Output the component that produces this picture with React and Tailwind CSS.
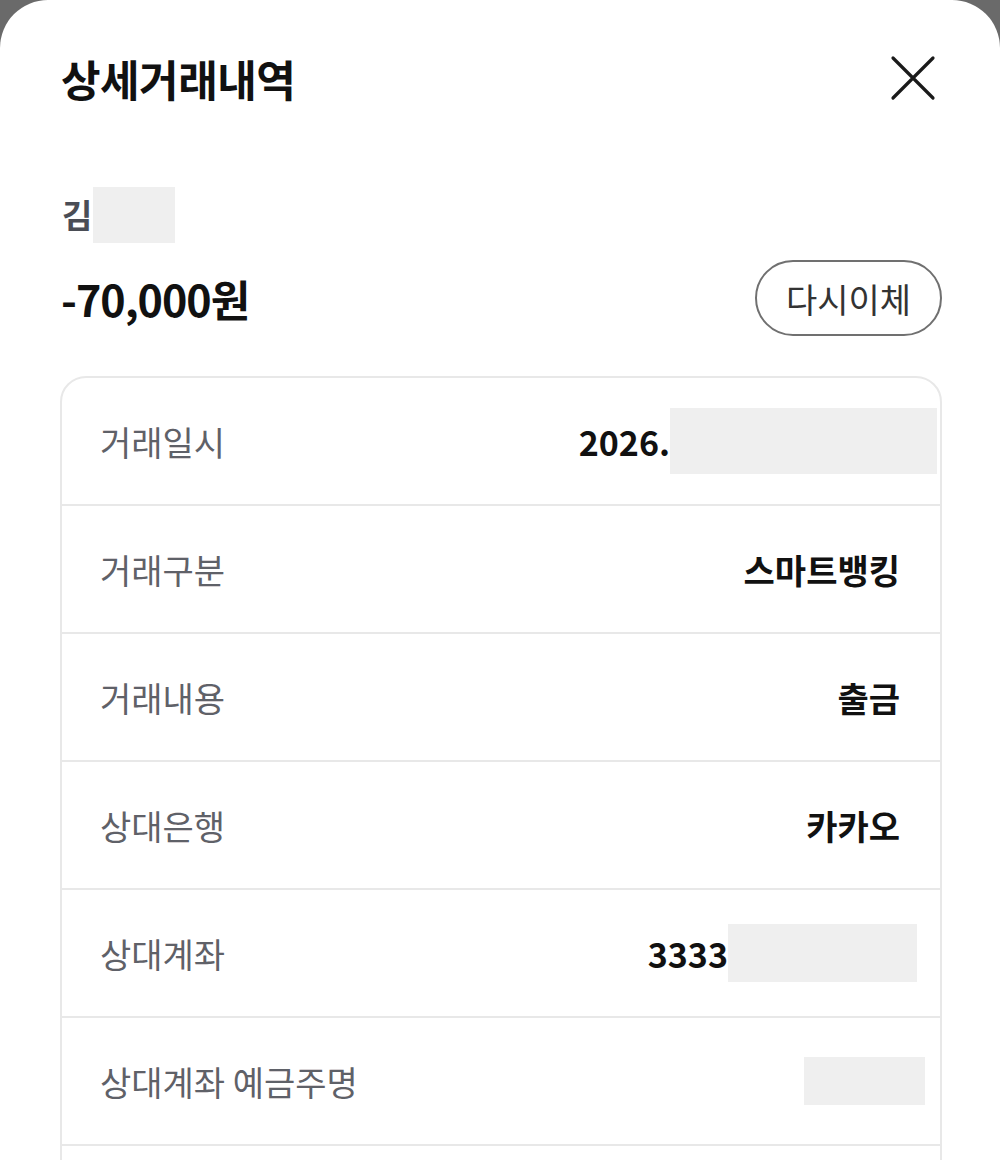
const rows = [
  { label: "거래일시", value: "2026.", blur: "w-[267px] h-[66px] -mr-[37px]" },
  { label: "거래구분", value: "스마트뱅킹" },
  { label: "거래내용", value: "출금" },
  { label: "상대은행", value: "카카오" },
  { label: "상대계좌", value: "3333", blur: "w-[189px] h-[58px] -mr-[17px]" },
  { label: "상대계좌 예금주명", value: "", blur: "w-[121px] h-[48px] -mr-[25px]" },
  { label: "", value: "" },
];

function CloseIcon() {
  return (
    <svg width="46" height="46" viewBox="0 0 46 46" fill="none">
      <path d="M3 3L43 43M43 3L3 43" stroke="#1a1a1a" strokeWidth="3.2" strokeLinecap="round" />
    </svg>
  );
}

export default function App() {
  return (
    <div
      className="h-[1160px] w-[1000px] overflow-hidden bg-[#6a6a6a]"
      style={{ fontFamily: '"Noto Sans CJK KR", "Noto Sans", sans-serif' }}
    >
      <div className="h-full rounded-t-[48px] bg-white">
        <div className="flex items-center justify-between pl-[61px] pr-[64px] pt-[52px]">
          <h1 className="text-[43px] font-bold leading-[52px] tracking-[-0.5px] text-[#111]">
            상세거래내역
          </h1>
          <CloseIcon />
        </div>

        <div className="ml-[62px] mt-[83px] flex h-[56px] items-center">
          <span className="text-[33px] font-bold text-[#4a4d55]">김</span>
          <span className="ml-[1px] h-[56px] w-[82px] bg-[#efefef]" />
        </div>

        <div className="ml-[61px] mr-[58px] mt-[17px] flex items-center justify-between">
          <span className="text-[43px] font-bold tracking-[-1px] text-[#111]">-70,000원</span>
          <button
            type="button"
            className="flex h-[76px] w-[187px] items-center justify-center rounded-full border-2 border-[#707070] text-[34px] text-[#333]"
          >
            다시이체
          </button>
        </div>

        <div className="ml-[60px] mr-[58px] mt-[40px] rounded-t-[26px] border-2 border-[#e8e8e8]">
          {rows.map((row, i) => (
            <div
              key={i}
              className="flex h-[128px] items-center justify-between border-b-2 border-[#e8e8e8] pl-[38px] pr-[40px]"
            >
              <span className="text-[34px] text-[#5f6168]">{row.label}</span>
              <span className="flex items-center text-[34px] font-semibold text-[#111]">
                {row.value}
                {row.blur && <span className={`bg-[#efefef] ${row.blur}`} />}
              </span>
            </div>
          ))}
        </div>
      </div>
    </div>
  );
}
